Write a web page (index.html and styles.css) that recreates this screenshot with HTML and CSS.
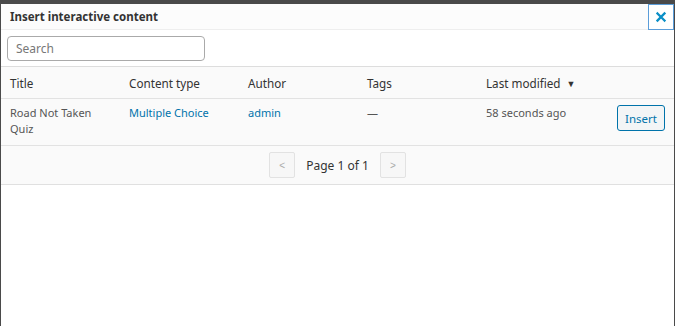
FILE: index.html
```html
<!DOCTYPE html>
<html lang="en">
<head>
  <meta charset="UTF-8">
  <title>Insert interactive content</title>
  <link rel="stylesheet" href="styles.css">
</head>
<body>
  <div class="dialog">
    <header class="dialog-head">
      <h1>Insert interactive content</h1>
      <button class="close" aria-label="Close">
        <svg width="12" height="12" viewBox="0 0 12 12"><path d="M2.5 2.5L9.5 9.5M9.5 2.5L2.5 9.5" stroke="#0a8fc7" stroke-width="2.3" stroke-linecap="square"/></svg>
      </button>
    </header>

    <div class="search-bar">
      <input type="text" class="search" placeholder="Search">
    </div>

    <table class="list">
      <colgroup>
        <col class="c"><col class="c"><col class="c"><col class="c"><col class="c"><col>
      </colgroup>
      <thead>
        <tr>
          <th>Title</th>
          <th>Content type</th>
          <th>Author</th>
          <th>Tags</th>
          <th>Last modified <span class="sort">&#9660;</span></th>
          <th></th>
        </tr>
      </thead>
      <tbody>
        <tr>
          <td>Road Not Taken Quiz</td>
          <td><a href="#">Multiple Choice</a></td>
          <td><a href="#">admin</a></td>
          <td>&mdash;</td>
          <td>58 seconds ago</td>
          <td class="act"><button class="insert">Insert</button></td>
        </tr>
      </tbody>
    </table>

    <div class="pager">
      <button class="page-btn">&lt;</button>
      <span class="page-info">Page 1 of 1</span>
      <button class="page-btn">&gt;</button>
    </div>
  </div>
</body>
</html>
```

FILE: styles.css
```css
html, body {
  margin: 0;
  padding: 0;
  height: 100%;
}
body {
  font-family: "Noto Sans", "Open Sans", sans-serif;
  background: #4a4a4a;
  color: #444;
  padding-top: 4px;
  box-sizing: border-box;
}
.dialog {
  background: #fff;
  margin: 0 1px;
  height: 100%;
}
.dialog-head {
  display: flex;
  align-items: center;
  justify-content: space-between;
  height: 25px;
  background: #fcfcfc;
  border-bottom: 1px solid #eee;
}
.dialog-head h1 {
  margin: 0 0 0 9px;
  font-size: 11.5px;
  font-weight: bold;
  color: #333;
}
.close {
  width: 26px;
  height: 26px;
  align-self: flex-start;
  padding: 0;
  border: 1px solid #5b9dd9;
  background: #fff;
  display: flex;
  align-items: center;
  justify-content: center;
}
.search-bar {
  padding: 6px 6px 5px;
  border-bottom: 1px solid #ddd;
}
.search {
  width: 198px;
  height: 25px;
  box-sizing: border-box;
  border: 1px solid #aaa;
  border-radius: 4px;
  padding: 0 8px;
  font-family: inherit;
  font-size: 12px;
  color: #333;
}
.search::placeholder {
  color: #777;
}
.list {
  width: 100%;
  border-collapse: collapse;
  table-layout: fixed;
  background: #fafafa;
  font-size: 11px;
}
.list col.c {
  width: 119px;
}
.list th {
  text-align: left;
  font-weight: normal;
  color: #333;
  height: 31px;
  padding: 0 9px;
  border-bottom: 1px solid #e2e2e2;
  font-size: 11.7px;
}
.sort {
  font-size: 9px;
  margin-left: 3px;
  vertical-align: 1px;
}
.list td {
  vertical-align: top;
  padding: 6px 9px 0;
  height: 40px;
  line-height: 16px;
  border-bottom: 1px solid #e2e2e2;
  color: #555;
}
.list a {
  color: #0073aa;
  text-decoration: none;
}
.list td.act {
  text-align: right;
  padding-top: 6px;
  padding-right: 9px;
}
.insert {
  width: 48px;
  height: 26px;
  border: 1px solid #0073aa;
  border-radius: 3px;
  background: #f3f5f6;
  color: #0073aa;
  font-family: inherit;
  font-size: 11.5px;
  padding: 0;
}
.pager {
  display: flex;
  align-items: center;
  justify-content: center;
  gap: 11px;
  height: 38px;
  background: #fafafa;
  border-bottom: 1px solid #e0e0e0;
}
.page-btn {
  width: 26px;
  height: 26px;
  border: 1px solid #e2e2e2;
  border-radius: 2px;
  background: #f7f7f7;
  color: #aaa;
  font-size: 10px;
  padding: 0;
}
.page-info {
  font-size: 12px;
  color: #333;
}
```
